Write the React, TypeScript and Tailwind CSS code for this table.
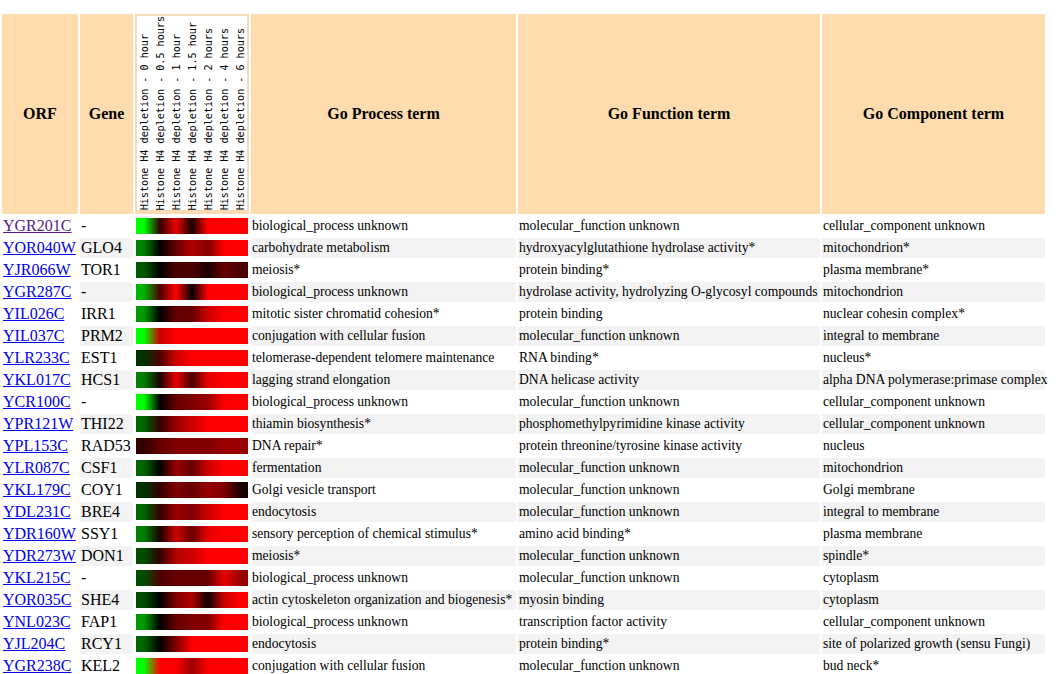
import React from "react";

type Row = {
  orf: string;
  gene: string;
  heat: number[];
  process: string;
  func: string;
  comp: string;
  visited?: boolean;
};

const rows: Row[] = [
  { orf: "YGR201C", gene: "-", heat: [-1, 0.2, 0.9, 0.1, 1, 1, 1], process: "biological_process unknown", func: "molecular_function unknown", comp: "cellular_component unknown", visited: true },
  { orf: "YOR040W", gene: "GLO4", heat: [-0.5, 0, 0.4, 0.7, 0.5, 1, 1], process: "carbohydrate metabolism", func: "hydroxyacylglutathione hydrolase activity*", comp: "mitochondrion*" },
  { orf: "YJR066W", gene: "TOR1", heat: [-0.35, 0, 0.3, 0.3, 0.1, 0.4, 0.3], process: "meiosis*", func: "protein binding*", comp: "plasma membrane*" },
  { orf: "YGR287C", gene: "-", heat: [-0.7, 0.3, 1, 0, 1, 1, 1], process: "biological_process unknown", func: "hydrolase activity, hydrolyzing O-glycosyl compounds", comp: "mitochondrion" },
  { orf: "YIL026C", gene: "IRR1", heat: [-0.6, 0, 0.4, 0.4, 0.8, 1, 1], process: "mitotic sister chromatid cohesion*", func: "protein binding", comp: "nuclear cohesin complex*" },
  { orf: "YIL037C", gene: "PRM2", heat: [-1, 0.8, 1, 1, 1, 1, 1], process: "conjugation with cellular fusion", func: "molecular_function unknown", comp: "integral to membrane" },
  { orf: "YLR233C", gene: "EST1", heat: [-0.2, 0.3, 0.8, 1, 1, 1, 1], process: "telomerase-dependent telomere maintenance", func: "RNA binding*", comp: "nucleus*" },
  { orf: "YKL017C", gene: "HCS1", heat: [-0.5, 0.1, 0.9, 0.3, 0.9, 1, 1], process: "lagging strand elongation", func: "DNA helicase activity", comp: "alpha DNA polymerase:primase complex" },
  { orf: "YCR100C", gene: "-", heat: [-1, 0, 0.4, 0.5, 0.6, 1, 1], process: "biological_process unknown", func: "molecular_function unknown", comp: "cellular_component unknown" },
  { orf: "YPR121W", gene: "THI22", heat: [-0.4, 0.2, 0.6, 0.8, 1, 1, 1], process: "thiamin biosynthesis*", func: "phosphomethylpyrimidine kinase activity", comp: "cellular_component unknown" },
  { orf: "YPL153C", gene: "RAD53", heat: [0.2, 0.4, 0.5, 0.5, 0.5, 0.6, 0.6], process: "DNA repair*", func: "protein threonine/tyrosine kinase activity", comp: "nucleus" },
  { orf: "YLR087C", gene: "CSF1", heat: [-0.4, 0, 0.6, 0.4, 0.8, 1, 1], process: "fermentation", func: "molecular_function unknown", comp: "mitochondrion" },
  { orf: "YKL179C", gene: "COY1", heat: [-0.2, 0.2, 0.5, 0.4, 0.6, 0.5, 0.1], process: "Golgi vesicle transport", func: "molecular_function unknown", comp: "Golgi membrane" },
  { orf: "YDL231C", gene: "BRE4", heat: [-0.4, 0.2, 0.6, 0.5, 0.8, 1, 1], process: "endocytosis", func: "molecular_function unknown", comp: "integral to membrane" },
  { orf: "YDR160W", gene: "SSY1", heat: [-0.5, 0.1, 0.8, 0.4, 0.9, 1, 1], process: "sensory perception of chemical stimulus*", func: "amino acid binding*", comp: "plasma membrane" },
  { orf: "YDR273W", gene: "DON1", heat: [-0.3, 0.2, 0.7, 0.8, 1, 1, 1], process: "meiosis*", func: "molecular_function unknown", comp: "spindle*" },
  { orf: "YKL215C", gene: "-", heat: [-0.3, 0.3, 0.4, 0.4, 0.4, 0.9, 0.6], process: "biological_process unknown", func: "molecular_function unknown", comp: "cytoplasm" },
  { orf: "YOR035C", gene: "SHE4", heat: [-0.3, 0, 0.5, 0.7, 0.05, 0.8, 1], process: "actin cytoskeleton organization and biogenesis*", func: "myosin binding", comp: "cytoplasm" },
  { orf: "YNL023C", gene: "FAP1", heat: [-0.6, 0, 0.4, 0.5, 0.5, 1, 1], process: "biological_process unknown", func: "transcription factor activity", comp: "cellular_component unknown" },
  { orf: "YJL204C", gene: "RCY1", heat: [-0.4, 0, 0.5, 1, 1, 1, 1], process: "endocytosis", func: "protein binding*", comp: "site of polarized growth (sensu Fungi)" },
  { orf: "YGR238C", gene: "KEL2", heat: [-1, 1, 1, 0.6, 1, 1, 1], process: "conjugation with cellular fusion", func: "molecular_function unknown", comp: "bud neck*" },
];

const times = ["0 hour", "0.5 hours", "1 hour", "1.5 hour", "2 hours", "4 hours", "6 hours"];

function color(v: number) {
  const c = Math.round(Math.min(1, Math.abs(v)) * 255);
  return v >= 0 ? `rgb(${c},0,0)` : `rgb(0,${c},0)`;
}

function heatGradient(vals: number[]) {
  const stops = vals.map((v, i) => `${color(v)} ${(((i + 0.5) / vals.length) * 100).toFixed(1)}%`);
  return `linear-gradient(to right, ${color(vals[0])} 0%, ${stops.join(", ")}, ${color(vals[vals.length - 1])} 100%)`;
}

const serif = "font-['Liberation_Serif','Times_New_Roman',serif]";

export default function App() {
  return (
    <div className={`min-h-screen bg-white pt-[12px] ${serif} text-black`}>
      <table className="table-fixed border-separate border-spacing-[2px]" style={{ width: 1047 }}>
        <colgroup>
          <col style={{ width: 76 }} />
          <col style={{ width: 53 }} />
          <col style={{ width: 114 }} />
          <col style={{ width: 265 }} />
          <col style={{ width: 302 }} />
          <col style={{ width: 223 }} />
        </colgroup>
        <thead>
          <tr className={`h-[200px] text-[16px] font-bold ${serif}`}>
            <th className={`bg-[#fedcae] text-center align-middle ${serif}`}>ORF</th>
            <th className={`bg-[#fedcae] text-center align-middle ${serif}`}>Gene</th>
            <th className="bg-[#fedcae] p-px align-top">
              <div className="flex h-[196px] border border-[#f3dcc0] bg-white">
                {times.map((t) => (
                  <div key={t} className="flex w-[16px] items-end justify-center">
                    <span className="rotate-180 whitespace-nowrap text-left font-['DejaVu_Sans_Mono',monospace] text-[10.1px] font-normal leading-[16px] [writing-mode:vertical-rl]">
                      Histone H4 depletion - {t}
                    </span>
                  </div>
                ))}
              </div>
            </th>
            <th className={`bg-[#fedcae] text-center align-middle ${serif}`}>Go Process term</th>
            <th className={`bg-[#fedcae] text-center align-middle ${serif}`}>Go Function term</th>
            <th className={`bg-[#fedcae] text-center align-middle ${serif}`}>Go Component term</th>
          </tr>
        </thead>
        <tbody>
          {rows.map((r, i) => {
            const bg = i % 2 === 1 ? "bg-[#f3f3f3]" : "bg-white";
            return (
              <tr key={r.orf} className="h-[20px]">
                <td className="whitespace-nowrap pl-px text-[16px] leading-[20px]">
                  <a href="#" className={`underline ${r.visited ? "text-[#551a8b]" : "text-[#0000ee]"}`}>
                    {r.orf}
                  </a>
                </td>
                <td className={`${bg} whitespace-nowrap pl-px text-[16px] leading-[20px]`}>{r.gene}</td>
                <td className="p-0 align-middle">
                  <div className="mx-px h-[16px]" style={{ background: heatGradient(r.heat) }} />
                </td>
                <td className={`${bg} whitespace-nowrap pl-px text-[13.6px] leading-[20px]`}>{r.process}</td>
                <td className={`${bg} whitespace-nowrap pl-px text-[13.6px] leading-[20px]`}>{r.func}</td>
                <td className={`${bg} whitespace-nowrap pl-px text-[13.6px] leading-[20px]`}>{r.comp}</td>
              </tr>
            );
          })}
        </tbody>
      </table>
    </div>
  );
}
